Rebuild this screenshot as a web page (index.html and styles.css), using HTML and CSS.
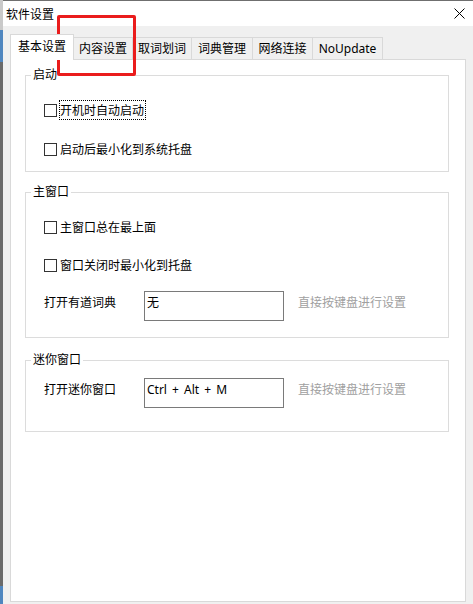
FILE: index.html
```html
<!DOCTYPE html>
<html lang="zh-CN">
<head>
<meta charset="utf-8">
<title>软件设置</title>
<link rel="stylesheet" href="styles.css">
</head>
<body>
<div class="window">
  <div class="edge"></div>
  <div class="main">
    <header class="titlebar">
      <span class="title">软件设置</span>
      <svg class="close" width="11" height="11" viewBox="0 0 11 11"><path d="M0.5 0.5L10.5 10.5M10.5 0.5L0.5 10.5" stroke="#000" stroke-width="1" fill="none"/></svg>
    </header>
    <div class="body">
      <div class="tabs">
        <div class="tab active">基本设置</div>
        <div class="tab t2">内容设置</div>
        <div class="tab t3">取词划词</div>
        <div class="tab t4">词典管理</div>
        <div class="tab t5">网络连接</div>
        <div class="tab t6">NoUpdate</div>
      </div>
      <div class="panel">
        <fieldset class="group g1">
          <legend>启动</legend>
          <div class="group-body">
            <div class="check-row"><span class="box"></span><span class="label focused">开机时自动启动</span></div>
            <div class="check-row"><span class="box"></span><span class="label">启动后最小化到系统托盘</span></div>
          </div>
        </fieldset>
        <fieldset class="group g2">
          <legend>主窗口</legend>
          <div class="group-body">
            <div class="check-row"><span class="box"></span><span class="label">主窗口总在最上面</span></div>
            <div class="check-row"><span class="box"></span><span class="label">窗口关闭时最小化到托盘</span></div>
            <div class="field-row">
              <span class="field-label">打开有道词典</span>
              <div class="input">无</div>
              <span class="hint">直接按键盘进行设置</span>
            </div>
          </div>
        </fieldset>
        <fieldset class="group g3">
          <legend>迷你窗口</legend>
          <div class="group-body">
            <div class="field-row">
              <span class="field-label">打开迷你窗口</span>
              <div class="input hotkey">Ctrl + Alt + M</div>
              <span class="hint">直接按键盘进行设置</span>
            </div>
          </div>
        </fieldset>
      </div>
    </div>
  </div>
  <div class="annotation"></div>
</div>
</body>
</html>
```

FILE: styles.css
```css
html, body {
  margin: 0;
  padding: 0;
}

body {
  width: 473px;
  height: 604px;
  overflow: hidden;
  font-family: "Noto Sans", "Noto Sans CJK SC", sans-serif;
  font-size: 12px;
  color: #000;
  background: #f0f0f0;
}

.window {
  position: relative;
  display: flex;
  height: 604px;
}

.edge {
  width: 3px;
  flex: none;
  background: linear-gradient(to bottom,
    #c9c9c9 0, #c9c9c9 30px,
    #4f86bf 30px, #4f86bf 62px,
    #6a6a6a 62px, #6a6a6a 586px,
    #4f86bf 586px, #4f86bf 604px);
}

.main {
  flex: 1;
  display: flex;
  flex-direction: column;
  min-width: 0;
}

.titlebar {
  height: 26px;
  box-sizing: border-box;
  border-top: 1px solid #6f6f6f;
  background: #fff;
  display: flex;
  align-items: center;
  justify-content: space-between;
  padding: 0 8px 0 3px;
}

.title {
  font-family: "Noto Sans CJK SC", sans-serif;
  line-height: 16px;
}

.close {
  display: block;
}

.body {
  flex: 1;
  display: flex;
  flex-direction: column;
  padding: 8px 7px 2px 7px;
  min-height: 0;
}

.tabs {
  display: flex;
  align-items: flex-end;
  height: 25px;
  flex: none;
}

.tab {
  box-sizing: border-box;
  height: 22px;
  border-top: 1px solid #d9d9d9;
  border-right: 1px solid #d9d9d9;
  display: flex;
  align-items: center;
  justify-content: center;
  line-height: 16px;
  background: #f0f0f0;
}

.tab.active {
  position: relative;
  z-index: 1;
  width: 64px;
  height: 26px;
  margin-bottom: -1px;
  border-left: 1px solid #d9d9d9;
  background: #fff;
  padding-bottom: 1px;
}

.t2 { width: 59px; }
.t3 { width: 59px; }
.t4 { width: 61px; }
.t5 { width: 60px; }
.t6 { width: 70px; }

.panel {
  flex: 1;
  box-sizing: border-box;
  border: 1px solid #d9d9d9;
  background: #fff;
  padding: 0 16px 0 14px;
}

.group {
  margin: 0;
  padding: 0;
  min-width: 0;
  border: 1px solid #dcdcdc;
}

.group legend {
  padding: 0 2px;
  margin-left: 5px;
  line-height: 16px;
}

.g1 { margin-top: 7px; }
.g2 { margin-top: 12px; }
.g3 { margin-top: 14px; }

.group-body {
  padding-left: 18px;
  display: flex;
  flex-direction: column;
}

.g1 .group-body {
  padding-top: 17px;
  padding-bottom: 12px;
  gap: 19px;
}

.g2 .group-body {
  padding-top: 17px;
  padding-bottom: 16px;
}

.g2 .check-row + .check-row {
  margin-top: 18px;
}

.g2 .field-row {
  margin-top: 16px;
}

.g3 .group-body {
  padding-top: 10px;
  padding-bottom: 23px;
}

.check-row {
  height: 20px;
  display: flex;
  align-items: center;
}

.box {
  width: 13px;
  height: 13px;
  box-sizing: border-box;
  border: 1px solid #333;
  background: #fff;
  margin-right: 2px;
  flex: none;
}

.label {
  box-sizing: border-box;
  line-height: 17px;
  padding: 1px 1px 0 0;
  border: 1px solid transparent;
}

.label.focused {
  border: 1px dotted #000;
}

.field-row {
  display: flex;
  align-items: flex-start;
}

.field-label {
  width: 100px;
  line-height: 16px;
  margin-top: 4px;
}

.input {
  width: 140px;
  height: 30px;
  box-sizing: border-box;
  border: 1px solid #7a7a7a;
  padding: 3px 2px 0 2px;
  line-height: 16px;
  background: #fff;
}

.hotkey {
  word-spacing: 2px;
}

.hint {
  margin-left: 14px;
  margin-top: 4px;
  line-height: 16px;
  color: #a0a0a0;
}

.annotation {
  position: absolute;
  left: 57px;
  top: 15px;
  width: 79px;
  height: 61px;
  box-sizing: border-box;
  border: 3px solid #ea1c1c;
  border-radius: 2px;
}
```
